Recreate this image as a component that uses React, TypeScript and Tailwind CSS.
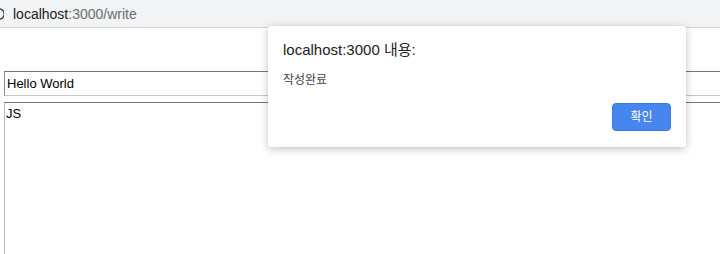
import React from "react";

export default function App() {
  return (
    <div
      className="relative w-[720px] h-[254px] overflow-hidden bg-white"
      style={{ fontFamily: '"Liberation Sans", Arial, "Noto Sans CJK KR", sans-serif' }}
    >
      {/* address bar */}
      <div className="h-[28px] bg-[#f1f3f4] border-b border-[#d5d7da] flex items-center">
        <svg width="10" height="14" viewBox="0 0 10 14" className="ml-[-6px]">
          <circle cx="5" cy="7" r="5.2" fill="none" stroke="#333" strokeWidth="1.3" />
        </svg>
        <div className="ml-[9px] text-[14px] leading-none">
          <span className="text-[#202124]">localhost</span>
          <span className="text-[#6b6e72]">:3000/write</span>
        </div>
      </div>

      {/* form */}
      <div className="pl-[4px] pt-[43px] flex flex-col gap-[6px]">
        <div className="h-[25px] w-[740px] border-[1px] border-t-[#767676] border-l-[#8a8a8a] border-b-[#c8c8c8] border-r-[#c8c8c8] flex items-center pl-[2px] text-[13px] text-black">
          Hello World
        </div>
        <div className="h-[200px] w-[740px] border-[1px] border-t-[#767676] border-l-[#b8b8b8] border-b-[#c8c8c8] border-r-[#c8c8c8] pl-[1px] pt-[3px] text-[13px] text-black leading-[16px]">
          JS
        </div>
      </div>

      {/* dialog */}
      <div className="absolute left-[268px] top-[26px] w-[418px] h-[121px] bg-white rounded-[3px] shadow-[0_2px_8px_rgba(0,0,0,0.25)]">
        <div className="pl-[15px] pt-[15px] text-[15px] leading-[18px] text-[#202124]">
          localhost:3000 내용:
        </div>
        <div className="pl-[15px] pt-[13px] text-[12px] leading-[16px] text-[#444]">
          작성완료
        </div>
        <div className="absolute right-[15px] bottom-[16px] w-[59px] h-[28px] rounded-[4px] bg-[#4686ee] border border-[#3b7ae3] flex items-center justify-center text-white text-[12px]">
          확인
        </div>
      </div>
    </div>
  );
}
